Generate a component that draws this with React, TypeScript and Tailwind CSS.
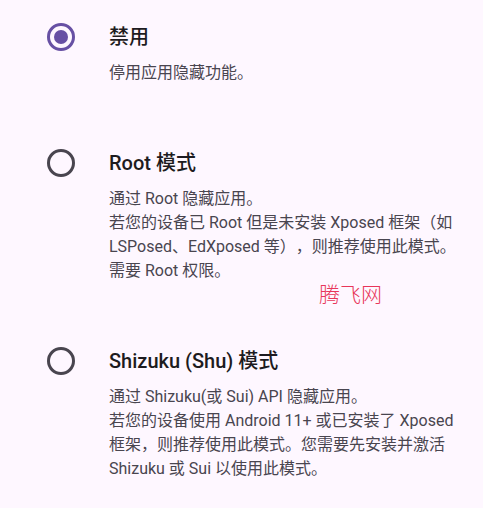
import { useState } from "react";

const FONT = "font-['Roboto','Noto_Sans_CJK_SC',sans-serif]";

const MODES = [
  {
    id: "disable",
    title: "禁用",
    lines: ["停用应用隐藏功能。"],
  },
  {
    id: "root",
    title: "Root 模式",
    lines: [
      "通过 Root 隐藏应用。",
      "若您的设备已 Root 但是未安装 Xposed 框架（如",
      "LSPosed、EdXposed 等），则推荐使用此模式。",
      "需要 Root 权限。",
    ],
  },
  {
    id: "shizuku",
    title: "Shizuku (Shu) 模式",
    lines: [
      "通过 Shizuku(或 Sui) API 隐藏应用。",
      "若您的设备使用 Android 11+ 或已安装了 Xposed",
      "框架，则推荐使用此模式。您需要先安装并激活",
      "Shizuku 或 Sui 以使用此模式。",
    ],
  },
];

function Radio({ checked }: { checked: boolean }) {
  return (
    <span
      className={
        checked
          ? "flex h-[28px] w-[28px] items-center justify-center rounded-full border-[3px] border-[#6750a4]"
          : "flex h-[28px] w-[28px] items-center justify-center rounded-full border-[3px] border-[#49454f]"
      }
    >
      {checked && <span className="h-[14px] w-[14px] rounded-full bg-[#6750a4]" />}
    </span>
  );
}

export default function App() {
  const [mode, setMode] = useState("disable");

  return (
    <div className={`relative min-h-screen bg-[#fef7ff] pt-[23px] [text-spacing-trim:space-all] ${FONT}`}>
      <div className="flex flex-col gap-[64px]">
        {MODES.map((m) => (
          <div key={m.id} className="flex cursor-pointer pl-[47px]" onClick={() => setMode(m.id)}>
            <div className="flex h-[28px] items-center">
              <Radio checked={mode === m.id} />
            </div>
            <div className="ml-[34px] flex flex-col">
              <div className="text-[20px] font-medium leading-[28px] text-[#1d1b20]">{m.title}</div>
              <div className="mt-[10px] text-[16px] leading-[24px] text-[#49454f]">
                {m.lines.map((l) => (
                  <div key={l} className="whitespace-nowrap">{l}</div>
                ))}
              </div>
            </div>
          </div>
        ))}
      </div>
      <div className="absolute left-[319px] top-[285px] text-[21px] font-light leading-none text-[#e8365a]">腾飞网</div>
    </div>
  );
}
